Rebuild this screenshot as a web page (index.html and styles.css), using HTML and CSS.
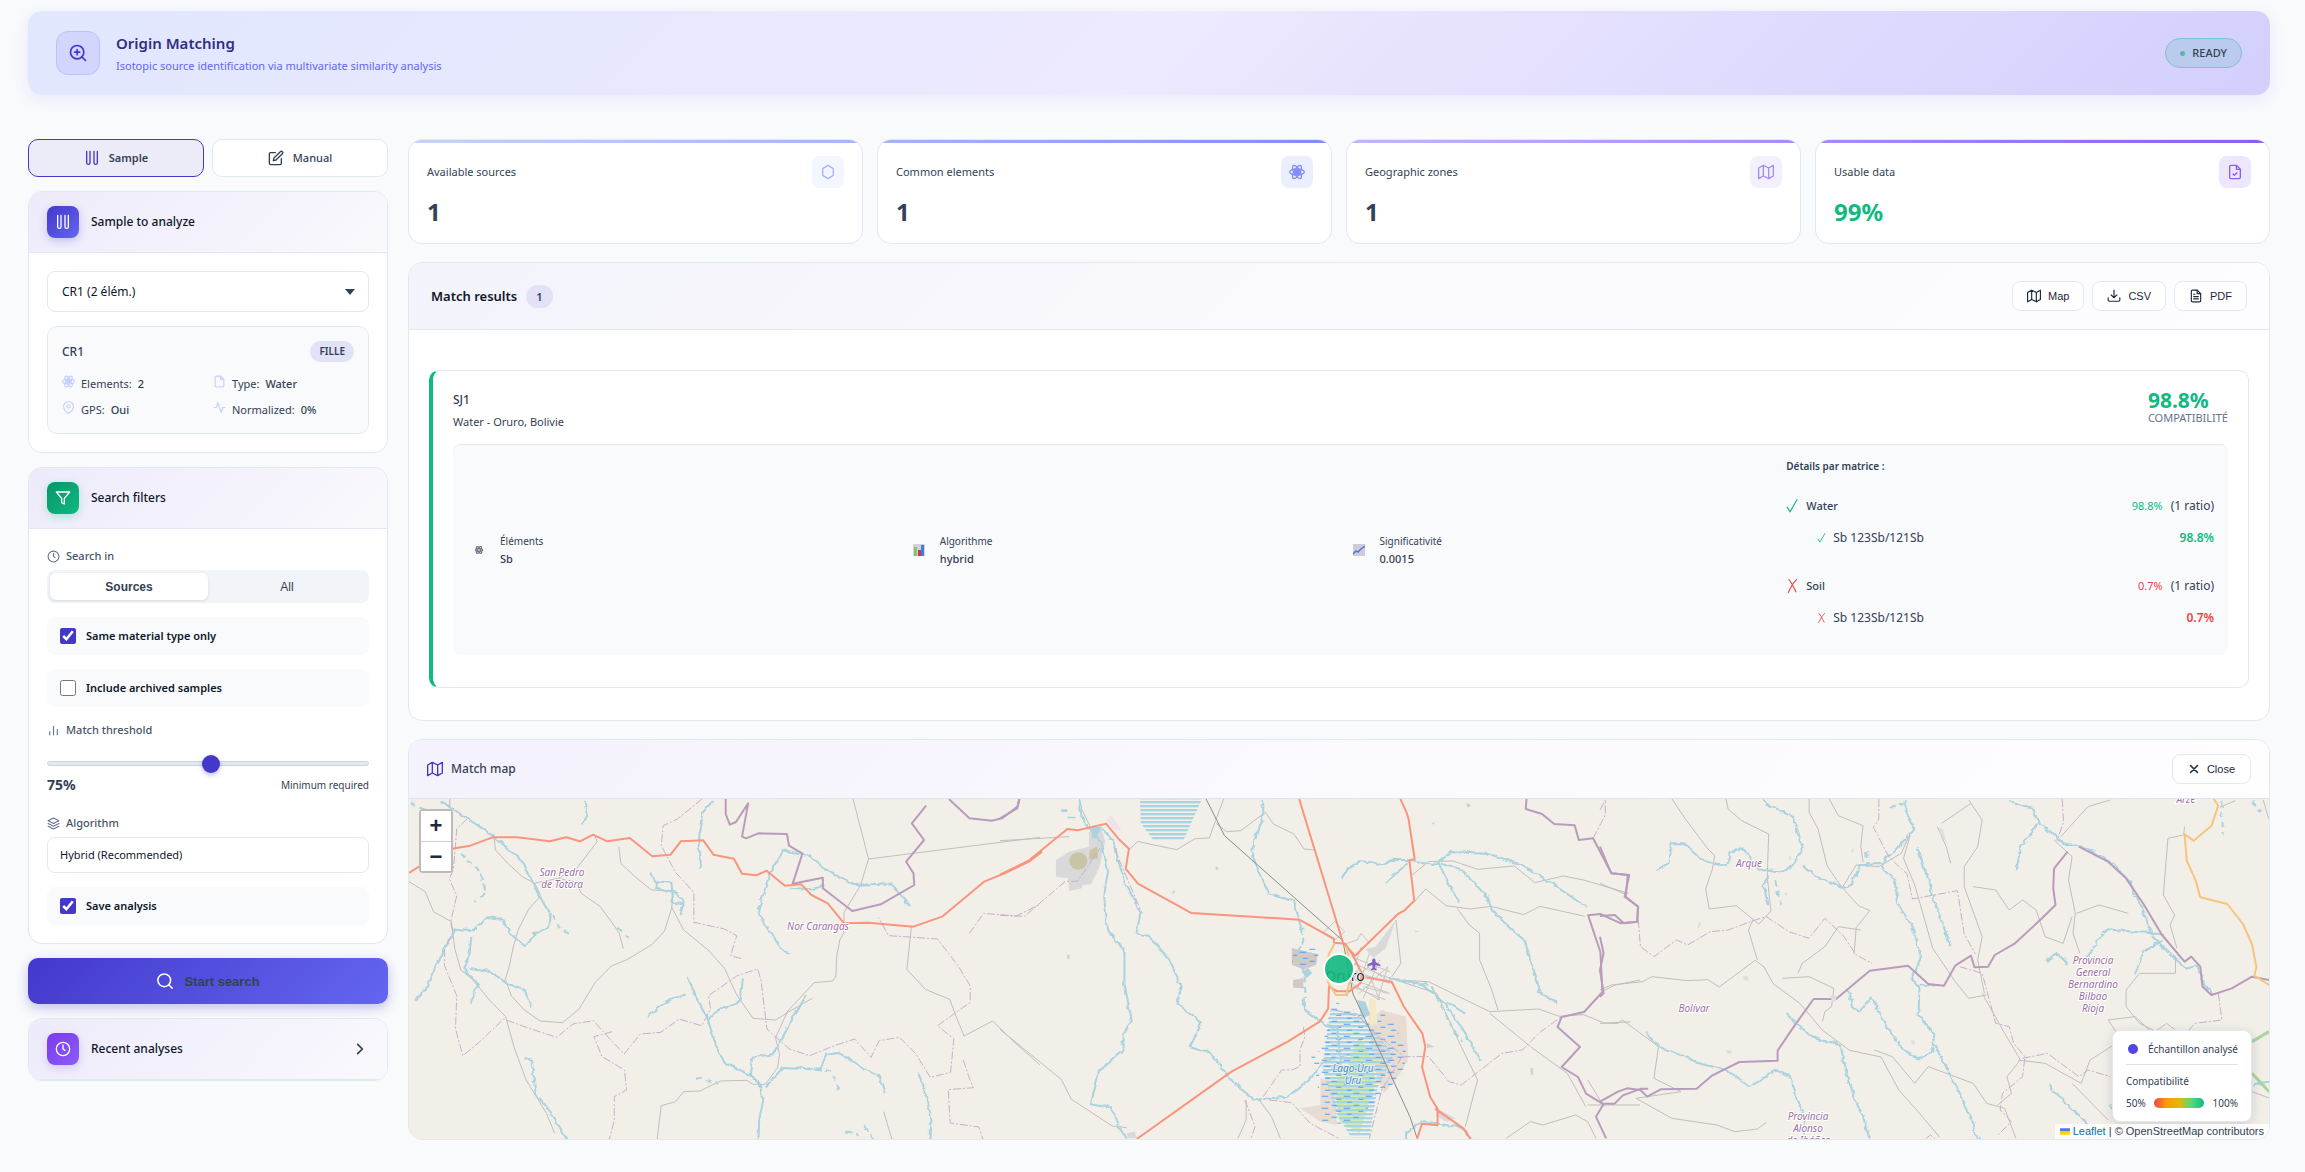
FILE: index.html
```html
<!DOCTYPE html>
<html lang="en">
<head>
<meta charset="utf-8">
<title>Origin Matching</title>
<link rel="stylesheet" href="styles.css">
</head>
<body>
<svg class="sprite" aria-hidden="true">
  <symbol id="i-zoom" viewBox="0 0 24 24"><circle cx="11" cy="11" r="8"/><path d="M21 21l-4.3-4.3M11 8v6M8 11h6"/></symbol>
  <symbol id="i-search" viewBox="0 0 24 24"><circle cx="11" cy="11" r="8.5"/><path d="M21.500 21.500l-4.500-4.500"/></symbol>
  <symbol id="i-tubes" viewBox="0 0 24 24"><path d="M4 2v17a2.500 2.500 0 0 0 5 0V2M15 2v17a2.500 2.500 0 0 0 5 0V2"/></symbol>
  <symbol id="i-edit" viewBox="0 0 24 24"><path d="M11 4H4a2 2 0 0 0-2 2v14a2 2 0 0 0 2 2h14a2 2 0 0 0 2-2v-7"/><path d="M18.500 2.500a2.100 2.100 0 0 1 3 3L12 15l-4 1 1-4z"/></symbol>
  <symbol id="i-hex" viewBox="0 0 24 24"><path d="M20 17V7l-8-5-8 5v10l8 5z"/></symbol>
  <symbol id="i-atom" viewBox="0 0 24 24"><circle cx="12" cy="12" r="3" fill="currentColor"/><ellipse cx="12" cy="12" rx="11" ry="4.500"/><ellipse cx="12" cy="12" rx="11" ry="4.500" transform="rotate(60 12 12)"/><ellipse cx="12" cy="12" rx="11" ry="4.500" transform="rotate(120 12 12)"/></symbol>
  <symbol id="i-map" viewBox="0 0 24 24"><path d="M1 6v16l7-4 8 4 7-4V2l-7 4-8-4zM8 2v16M16 6v16"/></symbol>
  <symbol id="i-filecheck" viewBox="0 0 24 24"><path d="M14 2H6a2 2 0 0 0-2 2v16a2 2 0 0 0 2 2h12a2 2 0 0 0 2-2V8z"/><path d="M14 2v6h6M9 15l2 2 4-4"/></symbol>
  <symbol id="i-file" viewBox="0 0 24 24"><path d="M14 2H6a2 2 0 0 0-2 2v16a2 2 0 0 0 2 2h12a2 2 0 0 0 2-2V8z"/><path d="M14 2v6h6"/></symbol>
  <symbol id="i-filetext" viewBox="0 0 24 24"><path d="M14 2H6a2 2 0 0 0-2 2v16a2 2 0 0 0 2 2h12a2 2 0 0 0 2-2V8z"/><path d="M14 2v6h6M16 13H8M16 17H8M10 9H8"/></symbol>
  <symbol id="i-download" viewBox="0 0 24 24"><path d="M22 15v4a2 2 0 0 1-2 2H4a2 2 0 0 1-2-2v-4M7 10l5 5 5-5M12 15V2"/></symbol>
  <symbol id="i-filter" viewBox="0 0 24 24"><path d="M22 3H2l8 9.500V19l4 2v-8.500z"/></symbol>
  <symbol id="i-clock" viewBox="0 0 24 24"><circle cx="12" cy="12" r="10"/><path d="M12 6v6l3 2"/></symbol>
  <symbol id="i-bars" viewBox="0 0 24 24"><path d="M19 20V10M12 20V4M5 20v-6"/></symbol>
  <symbol id="i-layers" viewBox="0 0 24 24"><path d="M12 2L2 7l10 5 10-5zM2 17l10 5 10-5M2 12l10 5 10-5"/></symbol>
  <symbol id="i-pin" viewBox="0 0 24 24"><path d="M21 10c0 7-9 13-9 13S3 17 3 10a9 9 0 0 1 18 0z"/><circle cx="12" cy="10" r="3"/></symbol>
  <symbol id="i-pulse" viewBox="0 0 24 24"><path d="M22 12h-4l-3 9L9 3l-3 9H2"/></symbol>
  <symbol id="i-chevron" viewBox="0 0 24 24"><path d="M8 4l8 8-8 8"/></symbol>
  <symbol id="i-close" viewBox="0 0 24 24"><path d="M5 5l14 14M19 5L5 19"/></symbol>
  <symbol id="i-tick" viewBox="0 0 24 24"><path d="M2 14l5 8L19 1"/></symbol>
  <symbol id="i-cross" viewBox="0 0 24 24"><path d="M5 1q4 4 12 21M18 1Q10 9 4 23"/></symbol>
</svg>

<header class="hero">
  <span class="hero-icon"><svg class="icon i20"><use href="#i-zoom"/></svg></span>
  <div class="hero-text">
    <h1>Origin Matching</h1>
    <p>Isotopic source identification via multivariate similarity analysis</p>
  </div>
  <span class="ready">READY</span>
</header>

<div class="layout">
  <aside class="side">
    <div class="tabs">
      <button class="tab active" type="button"><svg class="icon i16"><use href="#i-tubes"/></svg>Sample</button>
      <button class="tab" type="button"><svg class="icon i16"><use href="#i-edit"/></svg>Manual</button>
    </div>

    <section class="card">
      <div class="card-head"><span class="tile indigo"><svg class="icon i16"><use href="#i-tubes"/></svg></span><h2>Sample to analyze</h2></div>
      <div class="card-body">
        <div class="picker"><select aria-label="Sample"><option>CR1 (2 élém.)</option></select></div>
        <div class="info">
          <div class="info-top"><strong>CR1</strong><span class="tag">FILLE</span></div>
          <div class="info-grid">
            <span><svg class="icon i13"><use href="#i-atom"/></svg>Elements: <b>2</b></span>
            <span><svg class="icon i13"><use href="#i-file"/></svg>Type: <b>Water</b></span>
            <span><svg class="icon i13"><use href="#i-pin"/></svg>GPS: <b>Oui</b></span>
            <span><svg class="icon i13"><use href="#i-pulse"/></svg>Normalized: <b>0%</b></span>
          </div>
        </div>
      </div>
    </section>

    <section class="card">
      <div class="card-head"><span class="tile green"><svg class="icon i16"><use href="#i-filter"/></svg></span><h2>Search filters</h2></div>
      <div class="card-body filters">
        <div class="field">
          <span class="label"><svg class="icon i13"><use href="#i-clock"/></svg>Search in</span>
          <div class="segment"><button class="on" type="button">Sources</button><button type="button">All</button></div>
        </div>
        <label class="check"><input type="checkbox" checked>Same material type only</label>
        <label class="check"><input type="checkbox">Include archived samples</label>
        <div class="field range-field">
          <label class="label" for="threshold"><svg class="icon i13"><use href="#i-bars"/></svg>Match threshold</label>
          <input id="threshold" type="range" min="50" max="99" value="75">
          <div class="range-foot"><strong>75%</strong><span>Minimum required</span></div>
        </div>
        <div class="field">
          <label class="label" for="algo"><svg class="icon i13"><use href="#i-layers"/></svg>Algorithm</label>
          <select id="algo" class="plain-select"><option>Hybrid (Recommended)</option></select>
        </div>
        <label class="check"><input type="checkbox" checked>Save analysis</label>
      </div>
    </section>

    <button class="start" type="button"><svg class="icon i18"><use href="#i-search"/></svg>Start search</button>

    <section class="card">
      <div class="card-head recent"><span class="tile violet"><svg class="icon i16"><use href="#i-clock"/></svg></span><h2>Recent analyses</h2><svg class="icon i14 bold-icon"><use href="#i-chevron"/></svg></div>
    </section>
  </aside>

  <main class="main">
    <div class="stats">
      <article class="stat s1"><div class="stat-top"><span>Available sources</span><i class="stat-icon"><svg class="icon i16"><use href="#i-hex"/></svg></i></div><strong>1</strong></article>
      <article class="stat s2"><div class="stat-top"><span>Common elements</span><i class="stat-icon"><svg class="icon i16"><use href="#i-atom"/></svg></i></div><strong>1</strong></article>
      <article class="stat s3"><div class="stat-top"><span>Geographic zones</span><i class="stat-icon"><svg class="icon i16"><use href="#i-map"/></svg></i></div><strong>1</strong></article>
      <article class="stat s4"><div class="stat-top"><span>Usable data</span><i class="stat-icon"><svg class="icon i16"><use href="#i-filecheck"/></svg></i></div><strong>99%</strong></article>
    </div>

    <section class="card">
      <div class="results-head">
        <h2>Match results</h2><span class="count">1</span>
        <div class="actions">
          <button class="btn" type="button"><svg class="icon i14"><use href="#i-map"/></svg>Map</button>
          <button class="btn" type="button"><svg class="icon i14"><use href="#i-download"/></svg>CSV</button>
          <button class="btn" type="button"><svg class="icon i14"><use href="#i-filetext"/></svg>PDF</button>
        </div>
      </div>
      <div class="results-body">
        <article class="result">
          <div class="result-top">
            <div><h3>SJ1</h3><p>Water - Oruro, Bolivie</p></div>
            <div class="score"><strong>98.8%</strong><span>COMPATIBILITÉ</span></div>
          </div>
          <div class="details">
            <div class="fact"><svg class="emoji" viewBox="0 0 12 12"><circle cx="6" cy="6" r="4" fill="#c9c8d4"/><g fill="none" stroke="#77758a" stroke-width="1"><ellipse cx="6" cy="6" rx="4" ry="1.500"/><ellipse cx="6" cy="6" rx="4" ry="1.500" transform="rotate(60 6 6)"/><ellipse cx="6" cy="6" rx="4" ry="1.500" transform="rotate(120 6 6)"/></g></svg><div><span>Éléments</span><b>Sb</b></div></div>
            <div class="fact"><svg class="emoji" viewBox="0 0 12 12"><path fill="#d5d0dd" d="M0 0h12v12H0z"/><path fill="#7dcb5e" d="M1 3h3v9H1z"/><path fill="#e5255f" d="M5 6h3v6H5z"/><path fill="#2f86dc" d="M8 1h3v11H8z"/></svg><div><span>Algorithme</span><b>hybrid</b></div></div>
            <div class="fact"><svg class="emoji" viewBox="0 0 12 12"><path fill="#cfc9d8" d="M0 0h12v12H0z"/><path fill="none" stroke="#3f7fdc" stroke-width="1.500" d="M0 10l3-3 2 1 3-3 4-3"/></svg><div><span>Significativité</span><b>0.0015</b></div></div>
            <div class="matrix">
              <h4>Détails par matrice :</h4>
              <div class="group good">
                <div class="line"><svg class="icon i14"><use href="#i-tick"/></svg><b>Water</b><em>98.8%</em><span>(1 ratio)</span></div>
                <div class="line sub"><svg class="icon i10"><use href="#i-tick"/></svg><span>Sb 123Sb/121Sb</span><em>98.8%</em></div>
              </div>
              <div class="group bad">
                <div class="line"><svg class="icon i14"><use href="#i-cross"/></svg><b>Soil</b><em>0.7%</em><span>(1 ratio)</span></div>
                <div class="line sub"><svg class="icon i10"><use href="#i-cross"/></svg><span>Sb 123Sb/121Sb</span><em>0.7%</em></div>
              </div>
            </div>
          </div>
        </article>
      </div>
    </section>

    <section class="card">
      <div class="map-head"><svg class="icon i16"><use href="#i-map"/></svg><h2>Match map</h2><button class="btn close" type="button"><svg class="icon i12"><use href="#i-close"/></svg>Close</button></div>
      <div class="map">
        <svg class="map-art" viewBox="0 0 1860 340" preserveAspectRatio="xMidYMid slice" role="img" aria-label="Map around Oruro">
          <defs>
            <pattern id="reed" width="12" height="12" patternUnits="userSpaceOnUse"><rect y="3" width="12" height="7" fill="#aad3df"/></pattern>
            <pattern id="marsh" width="54" height="36" patternUnits="userSpaceOnUse"><path class="reeds" d="M2 4h14M32 13h16M14 22h12M40 31h12"/></pattern>
            <filter id="rough" x="-2%" y="-2%" width="104%" height="104%" color-interpolation-filters="sRGB">
              <feTurbulence type="turbulence" baseFrequency=".04" numOctaves="1" seed="4" result="n"/>
              <feDisplacementMap in="SourceGraphic" in2="n" scale="12" xChannelSelector="R" yChannelSelector="G"/>
            </filter>
          </defs>

          <!-- western sector -->
          <g transform="translate(-9 -79) scale(.40816 .33333)">
            <g class="minor">
              <path d="M230 352l4 38 30 40 36 40 30 20 15 38-30 40-25 60-12 50-10 60-10 40 15 50 30 40 40 35 55 5 40-40 40-80 40-50 40-20 60-45 30-40 18-70 2-50-52-3-40-40-35-40-5-50M478 350l5 15-50 80-45 30-60 15M390 476l40 10 15 35 45 38 30 50 17 30 10 47M22 485l40 30 20 60 44 30 8 80 15 65 30 30 40 60 40 50 20 90 30 100 50 100 20 60M665 560l30 70 60 60 40 55 30 80 40 70 55 5 40-30 50-35M1110 237l38 180 420-65M1148 417l-20 80-40 80v35M1253 618l-5 60-6 70 45 60 60 30 15 50 20 60 70-45 50 60 66 72M1185 1175l20 82M630 1257l10-100 35-12 20-30 40-2 50-30 65-2 15 12h30l30-50 5-40-10-50 30-80 65-85 45-5 8-15 2-60 8-50 10-20-8-20"/>
            </g>
            <g class="river">
              <path d="M95 240l60 45 60 50 35 35 45 50 25 60 25 60 20 40-5 40-30 15-28 38-30-30-25-50-40-5-30 40-45-5-20 45-30 70-20 60-30 40M170 645l-5 60-12 35 35 50-20 55M165 740l50 10 45 35 40 20 20 55M450 237l5 40-12 30M765 237l-25 30-12 80 5 95M610 450l10 30 40 5 5 60 25 5-5 30M625 480l-2 20 50 15 18 30M935 385l-30 65-30 120 25 60 30 50 20 20M930 387l70 15 50 50 60 40 90-5 45 65M955 500l50 5 30-15M700 765l20 60 30 70 20 80 20 50 70 40 20 30 5 40-10 60-2 85M605 885l40-40 50-28M835 770l-5 70-60 30-20 25M990 820l-45 100-35 80-50 10-5 50 25 40M890 1098l45-60 90 5 15-45 30-5 50 40 50 30 15 50M300 1010l20 10 10 100 45 70 30 65M1265 1055l20 60 12 80-2 60"/>
              <path class="dash" d="M22 245l40 20M145 395l50 60 10 60-25 25M370 580l20 45 30 15M530 620l25 30M720 1070l55 15M990 1040l60 8 25 65M1090 1230l30 10M1135 1215l20 40"/>
            </g>
            <path class="dashbound" d="M122 237v20l42 40-25 30-8 120-10 30 18 50-15 80 5 30-20 50v50l30 90-3 100 18 80 40-40 60-70 55 25 75 30 40-40 50-10 40 55 35 45 40-60 50-5 45-40 55 20 22-50-5-40 70-60 50-20 8 30 15 150 55 60 50 20 60-30 50-20 40 55 20-50 50-10 40 50 35 70 50-15 8-100-40-40 80-70v-50l-30-60-50-80-120-10-25-55M740 237l-60 60-35 20-5 60 35 80 45 60v90l75 20 30 20-15 60 30 10M1395 640l35-60 80 8 58-35M520 935l-45 15 20 60 55 40 5 60-30 20v70l-12 57M1380 1020l15 55 10 28-62 6 5 100 70 12 10 36"/>
            <path class="bound" d="M798 237v45l10 32 15-8 30-56-15 100 10 5 30-15 70 2 5 35 33 24-24 90 74-18v32l72 68 70-20 82-58-2-35-18-35 44-65-30-50 35-53M1345 237l50 58 55 7 25-7 38-35 5-23"/>
            <path class="road" d="M22 459l90-70 60-12 55-25h60l80 12 40-12 34 12 32-20 35 20 55-10 55 55 45-5 25-40 55-3 25 43 50 12 20 45 35 5 25-14 45 45 40-4 25 32 40 25 40 60 60-2 110 12 70-30 103-105 50-25 60-35 32-30"/>
          </g>

          <!-- central sector -->
          <g transform="translate(591 -19) scale(.40816 .33333)">
            <path fill="#d9d9d9" d="M170 215l-33 25v50l30 5 3 38 30-8 2-10 21-2 20-50 15-80-10-38-30 10v45zM920 500l50-80-25 85-30 28-20-25zM1070 985l45 30-20 10-25-15zM310 1060l20-5 5 20h-20z"/>
            <path fill="#c8c4a6" d="M170 243a22 26 0 0 1 44 0 22 26 0 0 1-44 0M220 210l18-10 2 35-22 3z"/>
            <path fill="#efe0ea" d="M260 117l12-10 26 42-18 2z"/>
            <path fill="#d2c9c6" d="M715 504l63 18-3 32-30 15-30-15zM718 600l25-5v30l-25-2z"/>
            <path fill="#e8dcd2" d="M935 690l60 20 5 130-30 60-30 40-25-80-15-130zM785 895l35 10 5 130-40-10-50-40 50-10z"/>
            <path fill="#cdebb0" d="M880 770l30 60 10 80-40 150-50-40-10-110 30-50z"/>
            <path fill="url(#reed)" d="M343 57h152l-45 122h-75l-30-50zM810 690l60 5 35 40 60 90-40 100-20 147h-45l-40-80-30-130z"/>
            <path fill="url(#marsh)" d="M810 660l60 30 80 10 45 100-5 80-50 60-80 95-70-10-20-180 30-90zM720 505h60v50h-65zM760 820l60 40-30 80z"/>
            <path fill="#f5e8c6" d="M905 655l15 5 5 70-20 10z"/>
            <path fill="#aad3df" d="M875 660l20 5 12 40-20 10zM740 575l15-10 10 15-15 15zM225 140h25l-15 35h-10zM150 88h15v8h-15zM165 110h20v5h-20z"/>
            <g class="minor">
              <path d="M0 182l170-12M195 57l5 30 20 50M548 57l-20 65-15 52-35 2-45 33-60-15-35-10-22 25M530 130l25 25 35-3 60-55M650 97l20 35 50 30 25 45 25 3M1010 285l40-40 60-2 60 25 90-10 50 50 70-20 50 12 110 40M1015 365l28-38 50 50 60 10 50-8 80 25 40-25 110 30M1120 385l30 50 25 25v80l30 90 15 60M970 600l80 5 150 90 120-8 50 22 60-5 50 25 65-3M970 600l100 40 60 160 40 100-30 140M0 748l150 150 25 60 100 80 35 5M603 960v60l-20 55M635 960l30 50 22 65M1200 700l100 100 90 80 45 100M1240 1075l60-50 30 10 80-30 30 20 20 50M1568 600l-60 15-35 20M1440 975h128M970 420l12 130-22 40M1440 900l40 80"/>
              <path class="mesh" d="M850 490l25-10 10-20 20 30M790 460l30 20 25-25-25-30zM870 600l50-60M880 640l70-80M900 560l60 50M890 620l60 20M910 600l20 60M860 610l70 50M850 650l30-90M860 530l95 45M865 550l90 45M870 575l85 35M870 600l85 40M865 620l80 40M885 500l-30 110M905 520l-30 110M930 540l-40 115M950 560l-25 100"/>
            </g>
            <g class="river">
              <path d="M190 57l5 50 50 80 15 80-10 80 10 100 40 60v100l18 110-20 40v50l-60 60-20 100 50 10 20 60 20 40M245 140l30 40 10 60 20 70 35 80-10 65 30 10 50 70 30 80-10 50 60 60-30 70 50 20 60 90 50 50 80-8 50-50 40-55 70-25M640 57v60l-22 60-3 50 20 60 20 50 60 20 20 90M742 650v35l50 45 30 10 10 120M833 290l15-30 30-20 55 10 20-14 50 2 60 12 40-40 80 5 90 35 80 60 80 65M940 305l55-60M1070 245l50 120M1075 245l50 20 65 80 10 40 50 60 30 30 40 160 40 30M950 590l80 20 60 60 30 60 55 108M1090 660l45 35M990 1075v-20l40-35 100 20 22 35"/>
              <path class="dash" d="M738 440v40l-12 40 15 60 3 70M960 590l90 20 50 120 30 50"/>
            </g>
            <path class="dashbound" d="M0 406l60 3 100-105h30l55-100M278 200l70 200M645 950l45-80h25l20-10v-50l12-40-4-30M600 960l25 80-10 35M660 960l55 8 45 62 70 45M820 690l60 20 30 40 80 80 60 0 50 75 30 10 100-95 50-10 40-50 55-50M985 830l-50 100-30 145M1453 175l30-70v-48"/>
            <path class="bound" d="M0 115l42-30 5-28M1290 57l-2 30 40 15 30 30 50 4 10 44 35-5 45 105 40 5-5 65 30 30-2 45-40 5-50-28-30 4 30 110 5 120-45 60-55 15-10 30 55 60-45 60 40 30 20 50 40 30h30l20-25 45-20h17M1480 970l-20 40 25 65"/>
            <path class="rail" d="M505 57l45 110 290 315 25 160 50 130 90 240 17 63"/>
            <path class="road" d="M0 284l70-42 95-95 25 4 70-20 30 45 26 30-8 60 30 45 130 88 265 20 85 57v12l28 3 20 38 20 50-2 30-28 25h-30l-20-15-2 67-20 38-78 60-138 90L335 1077M733 57l107 430 30 40 105-125 15-10 25-30-12-120 13-5-15-120-5-20-15-40M895 592l65 14 30 75 45 80 7 40-8 60 20 90 18 35v50l-38-5-12 45M1066 986l70 60 16 30"/>
            <path class="orange" d="M820 490l-15 35-2 80 20 40h25l15-70-15-75"/>
            <path class="plane" d="M916 534q6 5 4 12l12 8v5l-12-4-1 9 4 4v3l-7-2-7 2v-3l4-4-1-9-12 4v-5l12-8q-2-7 4-12z"/>
            <path fill="#cfcfcf" d="M165 525h5v12h-5zM528 262l6-3v10h-6zM422 335l6-5v8l-6 4zM1142 70l10 2v8l-8 2zM1300 865l6-2v20l-5 3zM1045 790l20 10-18 4zM1058 130l6-5v8h-6zM1016 452l10 2-8 3z"/>
          </g>

          <!-- eastern sector -->
          <g transform="translate(1191 -79) scale(.44964 .33333)">
            <g class="minor">
              <path d="M160 237l30 60 50 90 15 20-5 40-15 60 8 60 60-10 50 55 15-20 12-20-8-100 3-130-60-40-30-35-5-30M465 237v40l20 50 20 110 30 60 40 60 25 15-30 50-5 80M510 237l20 50 55 30-5 60 5 50M690 340l-20 60-50 40-50-5-30 65M690 345l-15 70 25 80 40 190 50 100 30 50 40-10M820 240l30 60-10 80-30 60v60l40 150-10 70 15 100M760 310l65-60M750 320l20 60 10 50M830 500l50 10 30 60 30-30 30 30 20 80 40 20 20-80M1010 360l40 50-8 70 15 100-5 60 15 60M1060 580l50-25 65 25M1135 240l-50 20-60 90M1300 320l-2 25-35 10-10 170 25 60-10 30 15 70M0 490l60 35M0 810l25-15 70-10 20-15 80 12 45-3 25 22 80-80 20 20 20 50 60 60 50 80 60 60 70 20 40 100 40 60 50 80M340 600l-10 30 20 90M405 775l60-5 55 35-5 55-15 15-5 30M440 760l10-30 50-50 30-60 50 10M610 990l40 20 50 80 30-50 100 50 30 60 40 15 25 90M0 910l40 0 10-10 80 80-10 95 60 40-100 20 80 60 100 20 40 20 50-8 20-20M850 820l50 120 35 80-30 50 10 50-30 35M930 1020l60 10 80 60 20-70 70-60-30-60 60-10 40 50 30-30 20 20M1050 1090l80 110M1280 710v50l-80 0-30 50v50l30 50 30 20M1450 1115l40 20M1378 262l35-20M1475 240l12 56"/>
            </g>
            <g class="river">
              <path d="M120 447l30-20 3-60h30l50 55 45 10 8-40 30-10 30 60 55 10 30-25 15-50-20-90-60-40-15-50M445 430l40 40 55 30 15-10 20-60 50-5 70-100-20-60V237M620 435l30 40 10 80 30 60 20 100-22 55 18 30-2 80 35 60-5 50-30 25-40-40-40-80-25-70-25 45-15-10-10-55M740 970l50 130 50 155M700 380l25 90 20 90 30 115M905 240l50 20 20 45 50 60 50 15 60 45 40 60 20 60 30 100 45 60 30 35 25-10 15 60 20 30M970 305l-40 75-8 65M1250 640l-40-5-90-10-40 85M1250 655l-45 35-20 70M990 720l20-25 30 35M98 935l30 40 90 50 60 20 50 50 60-50 30 20 20 80 15 50v60M410 875l20 30 50 50 50 15 15 90 20 80 20 60 10 55M740 795l-35-5M995 1090l40 60 40 50 10 50M370 460l-10 30 8 60M1130 1150l20 30M1450 1090l38-5"/>
              <path class="dash" d="M385 480l12 70M590 390v45M1380 240v100M1445 240l20 30M640 260l40-20"/>
            </g>
            <path class="dashbound" d="M85 600l5 80 30 30 50-50 25 15 50-40 40-5 60-30 25-10 50 45 45 20 35-60 40 50 30 60 35 25M620 237v60l-12 25 35 90 40 50 12 75 100-25 15 130 25 60M800 740l50 20 30 150 30 10 10 50 25 40-5 60-45 50-5 50 25 35-30 40M940 1015l55-15 70 70 20-20 50 20M1028 237l3 70-15 55M1375 820l8 80-60 10-20 30M725 1255l10-10 10 10M0 270l12-30"/>
            <path class="bound" d="M0 380l25 80 40 5-10 65 30 30-2 45-30 5-20-25-33 3M0 650l8 50-8 50 8 70-8 10M0 1145l40-30 20-10 30 5 15 20 30-22 80-2 35-40 60-40 85-4v-30l35-70 45-85h50l75-85 85-15 45 55 35 5 25-60 35-30 8 35 30-2 15-35 45-35 60-75 30-40-5-50 2-60 30-50M1065 380l65 45 40 50 40 80 40 90 50 80 15-15 20 30 5 60 20 25 45-20 45-35 38 10"/>
            <path class="orange" d="M1365 237l10 20-15 60-40 45-20-20 5 80 20 60 10 50 60 20 35 60 20 60 10 70-5 25 33 28"/>
            <path class="green" d="M1450 965l38-30M1450 1060l38 55"/>
            <path fill="#dedede" d="M318 768l12 2v12l-10-2zM280 990l15 2-6 10-8-2zM512 825l14 2-2 18h-8zM755 320l8 10 8 40-16-30zM410 520l6-4v10h-5zM220 605l6 4-6 15-4-2zM692 960l8 2v12l-6-2zM560 385l5 2-2 10-4-1zM420 408l6 2-2 10-4-2z"/>
          </g>

          <g class="place">
            <text x="153" y="77">San Pedro</text><text x="153" y="89">de Totora</text>
            <text x="409" y="131">Nor Carangas</text>
            <text x="1340" y="68">Arque</text>
            <text x="1285" y="213">Bolívar</text>
            <text x="1399" y="321">Provincia</text><text x="1399" y="333">Alonso</text><text x="1399" y="345">de Ibáñez</text>
            <text x="1684" y="165">Provincia</text><text x="1684" y="177">General</text><text x="1684" y="189">Bernardino</text><text x="1684" y="201">Bilbao</text><text x="1684" y="213">Rioja</text>
            <text x="1777" y="4">Arze</text>
            <g class="lake"><text x="944" y="273">Lago Uru</text><text x="944" y="285">Uru</text></g>
          </g>
          <text class="city" x="936" y="182">Oruro</text>
          <circle cx="930" cy="170" r="15" fill="#10b981" fill-opacity=".9" stroke="#fff" stroke-width="2"/>
        </svg>
        <div class="zoom"><button type="button" aria-label="Zoom in">+</button><button type="button" aria-label="Zoom out">−</button></div>
        <div class="map-corner">
          <div class="legend">
            <div class="legend-row first"><i class="dot"></i><span>Échantillon analysé</span></div>
            <span>Compatibilité</span>
            <div class="legend-row scale"><span>50%</span><i class="ramp"></i><span>100%</span></div>
          </div>
          <div class="credit"><svg class="flag" viewBox="0 0 12 8"><path fill="#4c7be1" d="M0 0h12v4H0z"/><path fill="#ffd500" d="M0 4h12v4H0z"/></svg> <a href="#leaflet">Leaflet</a> | © OpenStreetMap contributors</div>
        </div>
      </div>
    </section>
  </main>
</div>
</body>
</html>
```

FILE: styles.css
```css
* { box-sizing: border-box; }

body {
  margin: 0;
  padding: 11px 35px 32px 28px;
  background: #f9fafc;
  color: #334155;
  font: 11px/16px "Noto Sans", sans-serif;
}

h1, h2, h3, h4, p { margin: 0; }
button, select { font: inherit; color: inherit; }
b { font-weight: 500; }
em, i { font-style: normal; }

.sprite { position: absolute; width: 0; height: 0; }

.icon {
  flex: none;
  fill: none;
  stroke: currentColor;
  stroke-width: 2;
  stroke-linecap: round;
  stroke-linejoin: round;
}
.i10 { width: 10px; height: 10px; }
.i12 { width: 12px; height: 12px; }
.i13 { width: 13px; height: 13px; }
.i14 { width: 14px; height: 14px; }
.i16 { width: 16px; height: 16px; }
.i18 { width: 18px; height: 18px; }
.i20 { width: 20px; height: 20px; }

/* Header */
.hero {
  display: flex;
  align-items: center;
  gap: 16px;
  height: 84px;
  padding: 0 28px;
  border-radius: 14px;
  background: linear-gradient(135deg, #e0e7ff 0%, #ede9fe 50%, #d3cffd 100%);
  box-shadow: 0 4px 16px rgba(99, 102, 241, .12);
}
.hero-icon {
  display: grid;
  place-items: center;
  width: 44px;
  height: 44px;
  border: 1px solid #c0c0fb;
  border-radius: 12px;
  background: #d2d5fd;
  color: #4338ca;
}
.hero-text { flex: 1; }
.hero h1 { color: #312e81; font-size: 15px; line-height: 24px; font-weight: 600; }
.hero p { margin-top: 2px; color: #6366f1; line-height: 18px; }
.ready {
  display: flex;
  align-items: center;
  gap: 7px;
  height: 30px;
  padding: 0 14px;
  border: 1px solid #7dc4c9;
  border-radius: 15px;
  background: #bacbed;
  font-weight: 500;
}
.ready::before { content: ""; width: 5px; height: 5px; border-radius: 50%; background: #5bb5a5; }

/* Columns */
.layout {
  display: grid;
  grid-template-columns: 360px minmax(0, 1fr);
  gap: 20px;
  align-items: start;
  margin-top: 44px;
}
.side { display: flex; flex-direction: column; gap: 14px; }
.main { display: flex; flex-direction: column; gap: 18px; }

.tabs { display: grid; grid-template-columns: 1fr 1fr; gap: 8px; }
.tab {
  display: flex;
  align-items: center;
  justify-content: center;
  gap: 9px;
  height: 38px;
  border: 1px solid #e2e8f0;
  border-radius: 10px;
  background: #fff;
  font-weight: 500;
}
.tab.active { border-color: #4338ca; background: #ececf8; font-weight: 600; }
.tab.active .icon { color: #4338ca; }

.card {
  overflow: hidden;
  border: 1px solid #e2e8f0;
  border-radius: 14px;
  background: #fff;
}
.card-head {
  display: flex;
  align-items: center;
  gap: 12px;
  padding: 14px 18px;
  border-bottom: 1px solid #e2e8f0;
  background: linear-gradient(135deg, #edebfa, #f3f2fc 50%, #f9f9fd);
}
.card-head h2 { flex: 1; color: #0f172a; font-size: 12px; font-weight: 500; }
.recent { padding-right: 20px; }
.bold-icon { stroke-width: 3; }
.tile { display: grid; place-items: center; width: 32px; height: 32px; border-radius: 8px; color: #fff; }
.indigo { background: linear-gradient(135deg, #4338ca, #6366f1); box-shadow: 0 3px 8px rgba(67, 56, 202, .25); }
.green { background: linear-gradient(135deg, #059669, #10b981); box-shadow: 0 3px 8px rgba(16, 185, 129, .25); }
.violet { background: linear-gradient(135deg, #7c3aed, #8b5cf6); box-shadow: 0 3px 8px rgba(139, 92, 246, .25); }

.card-body { display: flex; flex-direction: column; gap: 14px; padding: 18px; }

select {
  width: 100%;
  appearance: none;
  border: 1px solid #e2e8f0;
  border-radius: 8px;
  background: #fff;
  color: #0f172a;
}
.picker { position: relative; }
.picker select { display: block; height: 41px; padding: 0 14px; font-size: 12px; }
.picker::after {
  content: "";
  position: absolute;
  top: 18px;
  right: 14px;
  border: 5px solid transparent;
  border-top: 6px solid #334155;
  border-bottom: 0;
}

.info {
  padding: 14px 14px 10px;
  border: 1px solid #e2e8f0;
  border-radius: 10px;
  background: #f8fafc;
}
.info-top { display: flex; align-items: center; justify-content: space-between; height: 21px; margin-bottom: 9px; }
.info-top strong { font-size: 12px; font-weight: 500; }
.tag { padding: 0 9px; border-radius: 11px; background: #e2e2f6; font-size: 10px; line-height: 21px; font-weight: 600; }
.info-grid { display: grid; grid-template-columns: 1fr 1fr; column-gap: 10px; }
.info-grid span { display: flex; align-items: center; gap: 6px; height: 26px; }
.info-grid .icon { margin-bottom: 6px; color: #c3cffb; }

.label { display: flex; align-items: center; gap: 6px; height: 18px; color: #475569; font-weight: 500; }
.label .icon { color: #64748b; }
.field { display: flex; flex-direction: column; gap: 5px; }
.segment {
  display: grid;
  grid-template-columns: 1fr 1fr;
  height: 33px;
  padding: 3px;
  border-radius: 8px;
  background: #f1f5f9;
}
.segment button { border: 0; border-radius: 6px; background: none; font: 12px "Liberation Sans", Arial, sans-serif; }
.segment .on { background: #fff; box-shadow: 0 1px 3px rgba(15, 23, 42, .12); font-weight: 700; }
.check {
  display: flex;
  align-items: center;
  gap: 10px;
  height: 38px;
  padding: 0 13px;
  border-radius: 8px;
  background: #f8fafc;
  color: #0f172a;
  font-weight: 600;
}
.check input { width: 16px; height: 16px; margin: 0; accent-color: #4338ca; }

.range-field { gap: 0; }
#threshold { width: 100%; height: 18px; margin: 15px 0 2px; appearance: none; background: none; }
#threshold::-webkit-slider-runnable-track { height: 5px; border: 1px solid #cbd5e1; border-radius: 3px; background: #e2e8f0; }
#threshold::-webkit-slider-thumb {
  width: 18px;
  height: 18px;
  margin-top: -7px;
  appearance: none;
  border-radius: 50%;
  background: #4338ca;
  box-shadow: 0 2px 5px rgba(67, 56, 202, .35);
}
.range-foot { display: flex; align-items: center; justify-content: space-between; height: 22px; margin-bottom: 4px; font-size: 10px; }
.range-foot strong { font-size: 14px; font-weight: 700; }
.plain-select { height: 36px; padding: 0 12px; }

.start {
  display: flex;
  align-items: center;
  justify-content: center;
  gap: 10px;
  height: 46px;
  border: 0;
  border-radius: 10px;
  background: linear-gradient(135deg, #4338ca, #6366f1);
  box-shadow: 0 4px 12px rgba(67, 56, 202, .3);
  font: bold 13px "Liberation Sans", Arial, sans-serif;
}
.start .icon { color: #fff; }

/* Stat cards */
.stats { display: grid; grid-template-columns: repeat(4, 1fr); gap: 14px; }
.stat {
  position: relative;
  overflow: hidden;
  height: 105px;
  padding: 16px 18px;
  border: 1px solid #e2e8f0;
  border-radius: 14px;
  background: #fff;
}
.stat::before { content: ""; position: absolute; inset: 0 0 auto; height: 3px; background: linear-gradient(90deg, var(--from), var(--to)); }
.stat-top { display: flex; align-items: center; justify-content: space-between; }
.stat-icon { display: grid; place-items: center; width: 32px; height: 32px; border-radius: 8px; background: var(--tint); color: var(--to); }
.stat strong { display: block; margin-top: 7px; font-size: 24px; line-height: 33px; }
.s1 { --from: #c7d2fe; --to: #a5b4fc; --tint: #f4f6ff; }
.s2 { --from: #a5b4fc; --to: #818cf8; --tint: #ebeefe; }
.s3 { --from: #c4b5fd; --to: #a78bfa; --tint: #f3f0fe; }
.s4 { --from: #a78bfa; --to: #8b5cf6; --tint: #ede7fe; }
.s4 strong { color: #10b981; }

/* Results */
.results-head {
  display: flex;
  align-items: center;
  gap: 9px;
  padding: 18px 22px;
  border-bottom: 1px solid #e2e8f0;
  background: linear-gradient(135deg, #f3f3fb, #faf9fd 50%, #fdfdff);
}
.results-head h2 { color: #0f172a; font-size: 13px; font-weight: 600; }
.count { padding: 0 10px; border-radius: 12px; background: #e3e1f7; line-height: 23px; font-weight: 600; }
.actions { display: flex; gap: 8px; margin-left: auto; }
.btn {
  display: flex;
  align-items: center;
  gap: 7px;
  height: 30px;
  padding: 0 14px;
  border: 1px solid #e2e8f0;
  border-radius: 8px;
  background: #fff;
  color: #1e293b;
  font: 11px "Liberation Sans", Arial, sans-serif;
}
.results-body { padding: 40px 20px 32px; }
.result {
  padding: 18px 20px 32px;
  border: 1px solid #e2e8f0;
  border-left: 4px solid #10b981;
  border-radius: 10px;
}
.result-top { display: flex; justify-content: space-between; height: 55px; }
.result h3 { font-size: 12px; line-height: 22px; font-weight: 500; }
.result-top p { line-height: 22px; }
.score strong { display: block; color: #10b981; font-size: 21px; line-height: 22px; }
.score span { display: block; line-height: 14px; color: #64748b; }
.details {
  display: grid;
  grid-template-columns: repeat(4, minmax(0, 1fr));
  gap: 12px;
  align-items: center;
  height: 211px;
  padding: 0 14px;
  border-top: 1px solid #e2e8f0;
  border-radius: 8px;
  background: #f8fafc;
}
.fact { display: flex; align-items: center; gap: 15px; padding-left: 6px; }
.emoji { width: 12px; height: 12px; }
.fact span { display: block; font-size: 10px; line-height: 18px; }
.fact b { display: block; line-height: 18px; }
.matrix { padding-bottom: 8px; }
.matrix h4 { font-size: 10px; font-weight: 600; line-height: 16px; }
.group { margin-top: 16px; font-size: 12px; }
.line { display: flex; align-items: center; gap: 6px; height: 32px; }
.line b { font-size: 11px; }
.line em { margin-left: auto; }
.line > em:not(:last-child) { margin-right: 2px; font-size: 11px; }
.sub { padding-left: 31px; }
.sub em { font-weight: 600; }
.good em, .good .icon { color: #10b981; }
.bad em, .bad .icon { color: #ef4444; }

/* Map */
.map-head {
  display: flex;
  align-items: center;
  gap: 8px;
  padding: 14px 18px;
  border-bottom: 1px solid #dbe4f0;
  background: linear-gradient(135deg, #f3f2fd, #faf9fe 50%, #fefeff);
}
.map-head > .icon { color: #4338ca; }
.map-head h2 { font-size: 12px; font-weight: 500; }
.close { margin-left: auto; padding: 0 15px; }
.close .icon { stroke-width: 3; }
.map { position: relative; height: 340px; overflow: hidden; background: #f2efe9; }
.map-art { display: block; width: 100%; height: 100%; }
.map-art path { vector-effect: non-scaling-stroke; }
.map-art .reeds { fill: none; stroke: #4aa0f5; stroke-width: 3; vector-effect: none; }
.minor path, .river path, .bound, .dashbound, .road, .orange, .green, .rail { fill: none; stroke-linejoin: round; }
.river { filter: url(#rough); }
.minor path { stroke: #c0bfbe; stroke-width: 1; }
.minor .mesh { stroke: #c9c7c4; }
.river path { stroke: #aad3df; stroke-width: 2; }
.river .dash { stroke-dasharray: 6 4; }
.bound { stroke: #b99cbb; stroke-width: 2; }
.dashbound { stroke: #c8aecb; stroke-width: 1; stroke-dasharray: 8 2 2 2; }
.road { stroke: #f9957c; stroke-width: 2; }
.orange { stroke: #f8c47c; stroke-width: 2; }
.green { stroke: #a8d5a2; stroke-width: 3; }
.rail { stroke: #8f8c88; stroke-width: 1; }
.plane { fill: #8461c4; }
.place text {
  fill: #9b6fa5;
  stroke: #fff;
  stroke-width: 2;
  paint-order: stroke;
  font-size: 10px;
  font-style: italic;
  text-anchor: middle;
}
.place .lake text { fill: #4a8dc0; stroke: #e3f0f4; }
.city { fill: #222; stroke: #fff; stroke-width: 1; paint-order: stroke; font-size: 14px; text-anchor: middle; }

.zoom {
  position: absolute;
  top: 10px;
  left: 10px;
  display: flex;
  flex-direction: column;
  border: 2px solid #bebbb6;
  border-radius: 4px;
}
.zoom button {
  width: 30px;
  height: 30px;
  padding: 0;
  border: 0;
  background: #fff;
  color: #1e293b;
  font: bold 22px/30px "Liberation Sans", Arial, sans-serif;
}
.zoom button + button { border-top: 1px solid #ccc; }
.map-corner { position: absolute; right: 0; bottom: 0; display: flex; flex-direction: column; align-items: flex-end; gap: 2px; }
.legend {
  width: 140px;
  margin-right: 17px;
  padding: 7px 13px 6px;
  border: 1px solid #e2e8f0;
  border-radius: 8px;
  background: #fff;
  box-shadow: 0 3px 12px rgba(15, 23, 42, .15);
  font-size: 10px;
}
.legend > span { display: block; line-height: 20px; }
.legend-row { display: flex; align-items: center; justify-content: space-between; }
.first { height: 27px; margin-bottom: 6px; padding-bottom: 5px; border-bottom: 1px solid #dfe3e8; }
.dot { width: 10px; height: 10px; margin-left: 2px; border-radius: 50%; background: #4f46e5; }
.scale { height: 24px; }
.ramp { width: 50px; height: 10px; border-radius: 5px; background: linear-gradient(90deg, #ef4444, #f59e0b 25%, #eab308 50%, #4ade80 75%, #10b981); }
.credit { padding: 0 5px; background: rgba(255, 255, 255, .8); font: 11px/15px "Liberation Sans", Arial, sans-serif; }
.credit a { color: #0078a8; text-decoration: none; }
.flag { width: 10px; height: 7px; }
```
